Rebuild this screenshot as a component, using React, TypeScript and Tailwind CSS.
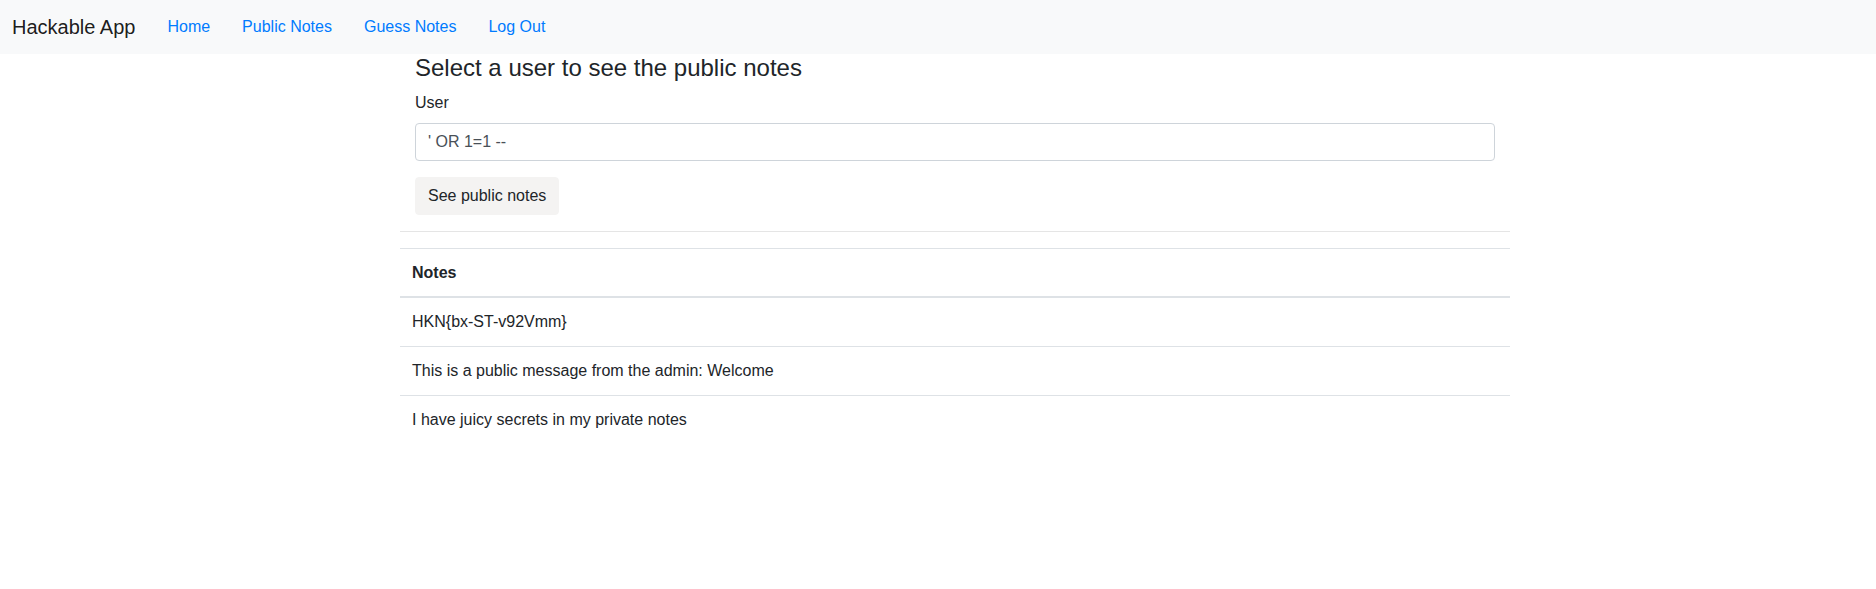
import React, { useState } from 'react'

const notes = [
  'HKN{bx-ST-v92Vmm}',
  'This is a public message from the admin: Welcome',
  'I have juicy secrets in my private notes',
]

export default function App() {
  const [user, setUser] = useState("' OR 1=1 --")

  return (
    <div className="min-h-[589px] bg-white text-[#212529] font-['Liberation_Sans',Arial,sans-serif] text-base">
      <nav className="h-[54px] bg-[#f8f9fa] flex items-center pl-[12px]">
        <a href="#" className="text-[20px] leading-[30px] text-black/90 mr-[16px]">
          Hackable App
        </a>
        <ul className="flex items-center">
          {['Home', 'Public Notes', 'Guess Notes', 'Log Out'].map(item => (
            <li key={item}>
              <a href="#" className="block px-[16px] leading-6 text-[#007bff]">
                {item}
              </a>
            </li>
          ))}
        </ul>
      </nav>

      <div className="ml-[400px] w-[1110px]">
        <div className="px-[15px]">
          <h4 className="text-[24px] leading-[1.2] font-medium mb-2">
            Select a user to see the public notes
          </h4>
          <form onSubmit={e => e.preventDefault()}>
            <div className="mb-4">
              <label className="block leading-6 mb-2">User</label>
              <input
                value={user}
                onChange={e => setUser(e.target.value)}
                className="block w-full h-[38px] px-3 border border-[#ced4da] rounded-[4px] text-[#495057] leading-6 outline-none"
              />
            </div>
            <button
              type="submit"
              className="block h-[38px] px-3 bg-[#f4f3f2] border border-[#f4f3f2] rounded-[4px] leading-6 text-[#212529]"
            >
              See public notes
            </button>
          </form>
        </div>

        <hr className="mt-4 mb-4 border-t border-black/10" />

        <table className="w-full border-collapse">
          <thead>
            <tr>
              <th className="text-left font-bold px-3 pt-[12px] pb-[11px] leading-6 border-t border-[#dee2e6] border-b-2">
                Notes
              </th>
            </tr>
          </thead>
          <tbody>
            {notes.map((n, i) => (
              <tr key={i}>
                <td
                  className={`px-3 pt-[12px] pb-[12px] leading-6 ${i > 0 ? 'border-t border-[#dee2e6]' : ''}`}
                >
                  {n}
                </td>
              </tr>
            ))}
          </tbody>
        </table>
      </div>
    </div>
  )
}
